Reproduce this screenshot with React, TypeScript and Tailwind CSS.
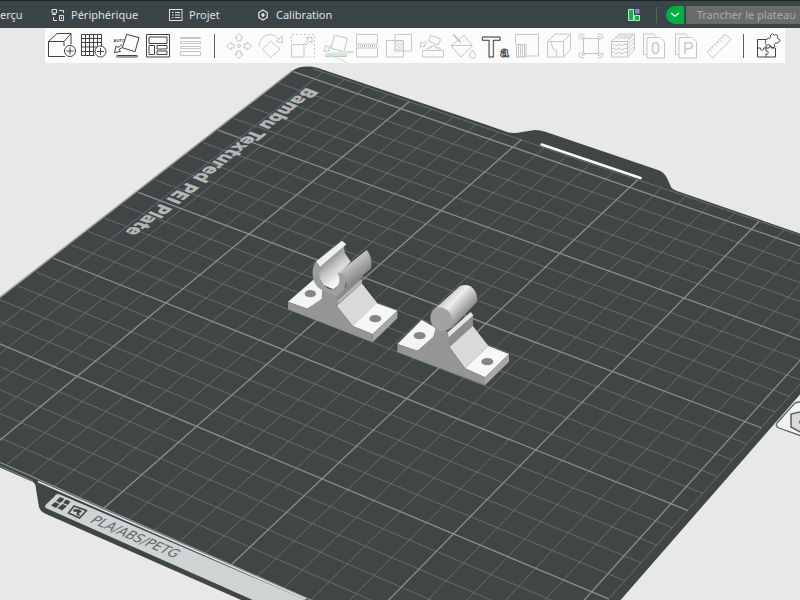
import type { ReactNode } from "react";

type Point = [number, number];

interface Tool {
  label: string;
  icon: ReactNode;
  active?: boolean;
}

// Bed coordinates are in units of 50 mm: u runs along the back edge, v towards the front
function project(u: number, v: number): Point {
  const d = 1 - 0.02 * u - 0.0286 * v;
  return [
    (293.3 + 99.5 * u - 81.5 * v) / d,
    (71.7 + 34.8 * u + 54.8 * v) / d,
  ];
}

function segment(from: Point, to: Point) {
  const [x1, y1] = project(from[0], from[1]);
  const [x2, y2] = project(to[0], to[1]);
  return `M${x1.toFixed(2)} ${y1.toFixed(2)}L${x2.toFixed(2)} ${y2.toFixed(2)}`;
}

const columns = Array.from({ length: 26 }, (_, i) => i);
const rows = Array.from({ length: 26 }, (_, i) => i);

const thinGrid = [
  ...columns.filter((i) => i % 5 !== 0).map((i) => segment([i / 5, -0.12], [i / 5, 5])),
  ...rows.filter((i) => i % 5 !== 0).map((i) => segment([0, i / 5], [5.12, i / 5])),
  segment([5.12, -0.12], [5.12, 5]),
  segment([0.1, -0.12], [5.12, -0.12]),
].join("");

const boldGrid = [
  ...columns.filter((i) => i % 5 === 0 && i > 0).map((i) => segment([i / 5, -0.12], [i / 5, 5])),
  ...rows.filter((i) => i % 5 === 0).map((i) => segment([0, i / 5], [5.12, i / 5])),
].join("");

const sceneTools: Tool[] = [
  {
    label: "Ajouter",
    active: true,
    icon: (
      <>
        <path d="M19 26.5H2.5V11.5H18V16M2.5 11.5L11 3.5H25V14.5M18 11.5L25 3.5" />
        <circle cx="24" cy="21" r="5.5" />
        <path d="M24 17.5V24.5M20.5 21H27.5" />
      </>
    ),
  },
  {
    label: "Ajouter un plateau",
    active: true,
    icon: (
      <>
        <path d="M3.5 4.5H23.5V16M16.5 25.5H3.5V4.5M7.5 4.5V25.5M11.5 4.5V25.5M15.5 4.5V25.5M19.5 4.5V16M3.5 8.5H23.5M3.5 12.5H23.5M3.5 17H19M3.5 21.5H16.5" />
        <circle cx="22.5" cy="21.5" r="5.5" />
        <path d="M22.5 18V25M19 21.5H26" />
      </>
    ),
  },
  {
    label: "Orientation automatique",
    active: true,
    icon: (
      <>
        <text x="3.5" y="11.5" fontSize="4" fontWeight="700" fill="currentColor" stroke="none">AUTO</text>
        <path d="M16.7 4.3L29 7.7L25 21.7L12.3 17.7ZM12 14.5L8 17.5L6 16L4.5 22.5L10.5 21.5L9 19.5L12 17.5" />
        <rect x="6.5" y="25.5" width="21" height="1.5" rx="0.7" />
      </>
    ),
  },
  {
    label: "Arranger",
    active: true,
    icon: (
      <>
        <rect x="4.5" y="4.5" width="23" height="22.5" />
        <rect x="7" y="7" width="18" height="6.5" />
        <rect x="7" y="15.5" width="5.5" height="9" />
        <rect x="15" y="15.5" width="10" height="3.5" />
        <rect x="15" y="21" width="10" height="3.5" />
      </>
    ),
  },
  {
    label: "Hauteur de couche variable",
    icon: <path d="M6.5 7.5H26.5V8.5H6.5ZM6.5 11.5H26.5V13.5H6.5ZM6.5 16.5H26.5V18.5H6.5ZM6.5 21.5H26.5V25.5H6.5Z" />,
  },
];

const editTools: Tool[] = [
  {
    label: "Déplacer",
    icon: (
      <>
        <path d="M16 3.5L20 8H18V11H14V8H12ZM16 28.5L20 24H18V21H14V24H12ZM3.5 16L8 12V14H11V18H8V20ZM28.5 16L24 12V14H21V18H24V20Z" />
        <circle cx="16" cy="16" r="1.5" />
      </>
    ),
  },
  {
    label: "Rotation",
    icon: <path d="M15.7 11L25 19.3L15.7 27.7L7.3 19.3ZM4.3 17C4 10 9 4.5 15 4.5C19 4.5 22 6.5 24 9.5M27 6L27.7 13L21 11.5Z" />,
  },
  {
    label: "Échelle",
    icon: (
      <>
        <rect x="4.5" y="14.5" width="12.5" height="12.5" />
        <path d="M4.5 12V4.5H27.5V27H19" strokeDasharray="2 2" />
        <path d="M18 14L19 15L23 11L25 13V7.5H19L21.5 9.5L17.5 13Z" />
      </>
    ),
  },
  {
    label: "Poser sur une face",
    icon: (
      <>
        <path d="M15.3 5L28.3 8.3L25 21.7L12.3 18.3ZM12 15L9.5 17L7 15.5L5 21.5L11 20.5L9.5 18.5L12 17" />
        <rect x="6.5" y="25" width="21" height="1.5" />
        <path className="stroke-[#b9e6ca]" d="M7 23C16 24 26 20 35 22C26 24 16 24 10 25C17 28 23 29 28 33" />
      </>
    ),
  },
  {
    label: "Couper",
    icon: (
      <>
        <path d="M5.5 14V4.5H26.5V14ZM5.5 18V27H26.5V18Z" />
        <path d="M5 16H27.5" strokeDasharray="1 1" strokeWidth="2" />
      </>
    ),
  },
  {
    label: "Opération booléenne",
    icon: <path d="M3.5 10.5H20.5V27H3.5ZM12 4.5H28.5V21H12ZM12 14L15.5 10.5M12 17.5L19 10.5M12 21L20.5 12.5M15 21L20.5 15.5M18 21L20.5 18.5" />,
  },
  {
    label: "Supports",
    icon: <path d="M7.5 20.5H28.5V27H7.5ZM15.7 5L25.7 9.3L23.3 15L13.3 11ZM11.5 10.5L8 13L6 12L5 17L10 16.5L9 15L12.5 12.5M12 20.5V18H16V16H21V18H25V20.5" />,
  },
  {
    label: "Peinture",
    icon: (
      <>
        <path d="M17.3 5.3L25.5 16L14 27L4 15.5ZM4 15.5H25M25.5 20C27.5 23 28.5 24.5 28.5 26C28.5 29 22.5 29 22.5 26C22.5 24.5 23.5 23 25.5 20Z" />
        <path d="M6.3 4.3L13.7 12.7" strokeWidth="1.8" />
      </>
    ),
  },
  {
    label: "Texte",
    active: true,
    icon: (
      <text x="3" y="27" fontSize="30" fontWeight="700">
        T<tspan fontSize="15">a</tspan>
      </text>
    ),
  },
  {
    label: "Peinture des coutures",
    icon: <path d="M4.5 14V4.5H27.5V26H15.5M5.5 14.5H15V27H5.5ZM7.5 14.5V27M9.5 14.5V27M11.5 14.5V27M13.5 14.5V27" />,
  },
  {
    label: "Découpe en volume",
    icon: <path d="M4.5 11.5H20.5V27H4.5ZM4.5 11.5L12 4H27.5V19.5L20.5 27M20.5 11.5L27.5 4M8 12L10 19L13 20L14 27" />,
  },
  {
    label: "Oreilles de souris",
    icon: (
      <>
        <path d="M8.5 8.5H23.5V23.5H8.5Z" />
        <path d="M5 9.5A3 3 0 1 1 9.5 5M22.5 5A3 3 0 1 1 27 9.5M27 22.5A3 3 0 1 1 22.5 27M9.5 27A3 3 0 1 1 5 22.5" />
        <circle cx="8" cy="8" r="1.5" /><circle cx="24" cy="8" r="1.5" />
        <circle cx="8" cy="24" r="1.5" /><circle cx="24" cy="24" r="1.5" />
      </>
    ),
  },
  {
    label: "Texture floue",
    icon: <path d="M4.5 11.5H20.5V27H4.5ZM4.5 11.5L12 4H27.5V19.5L20.5 27M20.5 11.5L27.5 4M4.5 15L6.5 14L9 16L12 14L15 16L18 14L20.5 15L27.5 8M4.5 19L6.5 18L9 20L12 18L15 20L18 18L20.5 19L27.5 12M4.5 23L6.5 22L9 24L12 22L15 24L18 22L20.5 23L27.5 16M11 6H25M9 8H23" />,
  },
  {
    label: "Vue objet",
    icon: (
      <>
        <path d="M7.5 24.5H4.5V4H14.5L17.5 7M8 7.5H21L25.5 12V28H8Z" />
        <text x="12" y="24" fontSize="16" fill="currentColor" stroke="none">0</text>
      </>
    ),
  },
  {
    label: "Paramètres objet",
    icon: (
      <>
        <path d="M7.5 24.5H4.5V4H14.5L17.5 7M8 7.5H21L25.5 12V28H8Z" />
        <text x="12" y="24" fontSize="16" fill="currentColor" stroke="none">P</text>
      </>
    ),
  },
  {
    label: "Mesurer",
    icon: <path d="M22 4L28 9.5L9.7 28L4 22ZM7 19.5L9 21.5M9.5 17L11 18.5M12 14.5L14 16.5M14.5 12L16 13.5M17 9.5L19 11.5M19.5 7L21 8.5" />,
  },
];

const puzzle: Tool = {
  label: "Assemblage",
  active: true,
  icon: (
    <path d="M14 9.5H5.5V27H23.5V18M5.5 18H8.5C7.5 21 12.5 21 11.5 18H14V15.5M14 27V24C17 25 17 20 14 21V18H17C16.5 16 19.5 16 19 18H23.5M20.5 3.5L22.5 5.5C24 3 27 6 25 7.5L28.3 10.5L25 13.5C24 12 21 14.5 23 16L21 18L17 14.5C15 16.5 12 13.5 14 12L13.3 10.5L16.5 8C18 9 19.5 7 18 6Z" />
  ),
};

function ToolButton({ tool }: { tool: Tool }) {
  return (
    <button
      type="button"
      aria-label={tool.label}
      className={`h-8 w-8 shrink-0 ${tool.active ? "text-[#3f4345]" : "text-[#c6c6c6]"}`}
    >
      <svg
        viewBox="0 0 32 32"
        fill="none"
        stroke="currentColor"
        strokeLinejoin="round"
        className="block h-8 w-8 overflow-visible font-['Liberation_Sans',sans-serif]"
      >
        {tool.icon}
      </svg>
    </button>
  );
}

function Divider() {
  return (
    <div className="flex w-[17px] shrink-0 justify-center">
      <div className="h-6 w-px bg-[#5a5d5f]" />
    </div>
  );
}

function Toolbar() {
  return (
    <div role="toolbar" className="absolute top-0 left-[45px] flex h-[35px] items-center bg-[#fcfcfc] px-px">
      {sceneTools.map((tool) => (
        <ToolButton key={tool.label} tool={tool} />
      ))}
      <Divider />
      {editTools.map((tool) => (
        <ToolButton key={tool.label} tool={tool} />
      ))}
      <Divider />
      <ToolButton tool={puzzle} />
    </div>
  );
}

function Header() {
  return (
    <header className="flex h-7 items-center overflow-hidden border-t border-[#1d2527] bg-[#3b4446] text-[11px] leading-4 text-[#dfe2e2]">
      <nav className="flex items-center">
        <a href="#apercu" className="w-[51px]">erçu</a>
        <a href="#peripherique" className="flex w-[118px] items-center gap-1.5">
          <svg viewBox="0 0 14 14" className="h-[14px] w-[14px]" fill="none" stroke="currentColor">
            <path d="M1 1.5H5.5V5H1ZM3 5V6.5M8 2.5H12.5V5M2.5 9V12.5H6M8.5 7.5H12.5V12.5H8.5ZM10.5 9V11M1 6.5H5" />
          </svg>
          Périphérique
        </a>
        <a href="#projet" className="flex w-[88px] items-center gap-1.5">
          <svg viewBox="0 0 14 14" className="h-[14px] w-[14px]" fill="none" stroke="currentColor">
            <rect x="0.5" y="1.5" width="12.5" height="11" />
            <path d="M3 4.5H4.5M6 4.5H11M3 7H4.5M6 7H11M3 9.5H4.5M6 9.5H11" />
          </svg>
          Projet
        </a>
        <a href="#calibration" className="flex items-center gap-[7px]">
          <svg viewBox="0 0 12 14" className="h-[14px] w-3" fill="none" stroke="currentColor">
            <path d="M6 2L10.2 4.5V9.5L6 12L1.8 9.5V4.5Z" strokeWidth="1.3" />
            <path d="M6 4.5L8 7L6 9.5L4 7Z" fill="currentColor" stroke="none" />
          </svg>
          Calibration
        </a>
      </nav>
      <div className="ml-auto flex items-center">
        <button type="button" aria-label="Disposition" className="mr-4">
          <svg viewBox="0 0 12 12" className="h-3 w-3" fill="#12b24b" stroke="#b5e8c6">
            <path d="M0.5 0.5H5.5V11.5H0.5ZM6.5 6.5H11.5V11.5H6.5Z" />
            <rect x="7" y="0" width="4.5" height="4.5" fill="#9b78d8" stroke="none" />
          </svg>
        </button>
        <div className="mr-[9px] h-4 w-px bg-[#5b6365]" />
        <button type="button" aria-label="Options de tranchage" className="flex h-[18px] w-[18px] items-center justify-center rounded-l-full bg-[#00ae42]">
          <svg viewBox="0 0 10 6" className="ml-px h-[6px] w-[10px]" fill="none" stroke="#fff" strokeWidth="1.2">
            <path d="M1 1L5 4.300L9 1" />
          </svg>
        </button>
        <button type="button" className="ml-[2px] h-[18px] bg-[#6b6b6b] pr-1 pl-[11px] whitespace-nowrap text-[#acacac]">
          Trancher le plateau
        </button>
      </div>
    </header>
  );
}

function Clip() {
  return (
    <g>
      <path fill="#f4f4f4" d="M54 245L132 178L165 200L155 240L112 266Z" />
      <path fill="#d9d9d9" d="M200 257L275 190L322 250L248 318Z" />
      <path fill="#8c8c8c" d="M196 228L272 160L275 190L200 257Z" />
      <path fill="#b7b7b7" d="M203 242L275 178L276 188L203 252Z" />
      <path fill="#f7f7f7" d="M248 318L320 250L382 272L308 342Z" />
      <path fill="#a6a6a6" d="M308 342L382 272V295L308 367Z" />
      <path fill="#959595" d="M54 245L112 266L155 236L157 205L200 222V257L248 318L308 342V367L54 268Z" />
      <path fill="url(#bore)" d="M148 138L222 76L224 98L242 125L208 160L214 190L190 208L160 195L146 170Z" />
      <path fill="url(#shell)" d="M203 160L290 90C302 104 307 124 303 145L222 218C234 198 230 180 218 165Z" />
      <path
        fill="#9e9e9e"
        d="M140 122C122 142 124 182 144 202L158 212L198 229C224 214 236 190 222 162L203 159C214 180 208 203 188 208C160 206 138 172 151 140Z"
      />
      <path fill="#efefef" d="M139 124L216 62L229 73L150 140Z" />
      <ellipse cx="121" cy="221" rx="17" ry="11" fill="#858585" />
      <ellipse cx="316" cy="296" rx="18" ry="11" fill="#858585" />
    </g>
  );
}

function Pin() {
  return (
    <g>
      <path fill="#f4f4f4" d="M382 372L455 300L500 325L490 352L443 392Z" />
      <path fill="#d9d9d9" d="M538 380L607 316L655 378L585 445Z" />
      <path fill="#8c8c8c" d="M533 350L609 284V318L538 382Z" />
      <path fill="#e4e4e4" d="M530 340L602 276L610 286L534 353Z" />
      <path fill="#f7f7f7" d="M585 445L655 378L717 402L645 472Z" />
      <path fill="#a6a6a6" d="M645 472L717 402V425L645 496Z" />
      <path fill="#959595" d="M382 372L443 392L490 350L498 320L534 335L538 382L585 445L645 472V496L382 396Z" />
      <path fill="url(#rod)" d="M488 272L570 198C600 186 626 212 621 246L546 324L520 333Z" />
      <ellipse cx="514" cy="298" rx="32" ry="37" transform="rotate(-30 514 298)" fill="#a2a2a2" />
      <ellipse cx="449" cy="347" rx="18" ry="11" fill="#858585" />
      <ellipse cx="652" cy="425" rx="18" ry="11" fill="#858585" />
    </g>
  );
}

function Scene() {
  return (
    <svg viewBox="0 28 800 572" className="block h-auto w-full" role="img" aria-label="Plateau d'impression">
      <defs>
        <linearGradient id="bore" gradientUnits="userSpaceOnUse" x1="175" y1="110" x2="222" y2="165">
          <stop offset="0" stopColor="#8d8d8d" />
          <stop offset="0.5" stopColor="#c9c9c9" />
          <stop offset="1" stopColor="#f4f4f4" />
        </linearGradient>
        <linearGradient id="shell" gradientUnits="userSpaceOnUse" x1="242" y1="128" x2="275" y2="170">
          <stop offset="0" stopColor="#c4c4c4" />
          <stop offset="1" stopColor="#858585" />
        </linearGradient>
        <linearGradient id="rod" gradientUnits="userSpaceOnUse" x1="530" y1="235" x2="583" y2="285">
          <stop offset="0" stopColor="#cfcfcf" />
          <stop offset="0.3" stopColor="#ededed" />
          <stop offset="1" stopColor="#8b8b8b" />
        </linearGradient>
      </defs>

      {/* plate with its rear handle and front tab */}
      <path
        fill="#404545"
        d="M-10 305L292 71Q302 64 318 68L490 126L507 132Q514 134 522 132L535 130Q540 130 546 132L658 170Q664 172 667 178L671 187Q672 189 677 191L810 237V383L618 603H248L46 514Q40 511 39 507L36 489Q36 484 33 482L-10 463Z"
      />
      <path d="M541.5 144.5L640.5 178" stroke="#fafafa" strokeWidth="2.6" strokeLinecap="round" />
      <path d={thinGrid} stroke="#707676" strokeWidth="0.8" fill="none" />
      <path d={boldGrid} stroke="#8a8f8f" strokeWidth="1.3" fill="none" />
      <path d="M-10 305L292 71" stroke="#9ea3a2" strokeWidth="1.5" />
      <path d="M0 466L33 481" stroke="#8e9393" strokeWidth="0.8" />

      {/* material strip on the front tab */}
      <path d="M38 481.5L306 599" stroke="#dfe3e3" strokeWidth="1.6" />
      <path d="M60 494.5Q56 493 54 497L45.5 505Q44 508 48 509L255 601H306L304 599Z" fill="#ced3d3" />
      <path
        fill="#404545"
        d="M60 497L64.5 499L60.5 503L56 501ZM55 502L59.5 504L56 508L51 505.500ZM66 499.500L70.500 501.500L68 505L63 503ZM62.500 504L67 506L62 510.500L57.500 508Z"
      />
      <path d="M74 506L86.500 510.500L79.500 518L68.500 513Z" fill="none" stroke="#404545" strokeWidth="1.7" strokeLinejoin="round" />
      <path d="M74 509L80 509.500L82 512L79 513L80 516L76.500 515L77 512L73 511.500Z" fill="#404545" />
      <text
        transform="translate(89 522) rotate(23) skewX(-26)"
        fontSize="13"
        fill="#636969"
        className="font-['DejaVu_Sans',sans-serif]"
      >
        PLA/ABS/PETG
      </text>
      <text
        transform="translate(307 87) rotate(141.5) skewX(30)"
        fontSize="16"
        fontWeight="700"
        fill="#b3b7b7"
        stroke="#b3b7b7"
        strokeWidth="0.4"
        className="font-['DejaVu_Sans',sans-serif]"
      >
        Bambu Textured PEI Plate
      </text>

      <g transform="translate(270 220) scale(0.33333)">
        <Clip />
        <Pin />
      </g>

      {/* plate settings tag */}
      <path d="M804 402H799Q796 402 794 404L777 423Q775 426 779 428L804 437Z" fill="#f3f3f3" stroke="#5d6162" strokeWidth="1.3" />
      <path d="M804 411L791 414V427L804 434" fill="#d9dbdb" stroke="#5d6162" strokeWidth="1.5" />
      <circle cx="801" cy="422" r="2" fill="#5d6162" />
    </svg>
  );
}

export default function App() {
  return (
    <div className="flex min-h-screen flex-col bg-[#e8e8e8] font-['Noto_Sans',sans-serif]">
      <Header />
      <main className="relative flex-1 overflow-hidden">
        <Scene />
        <Toolbar />
      </main>
    </div>
  );
}
